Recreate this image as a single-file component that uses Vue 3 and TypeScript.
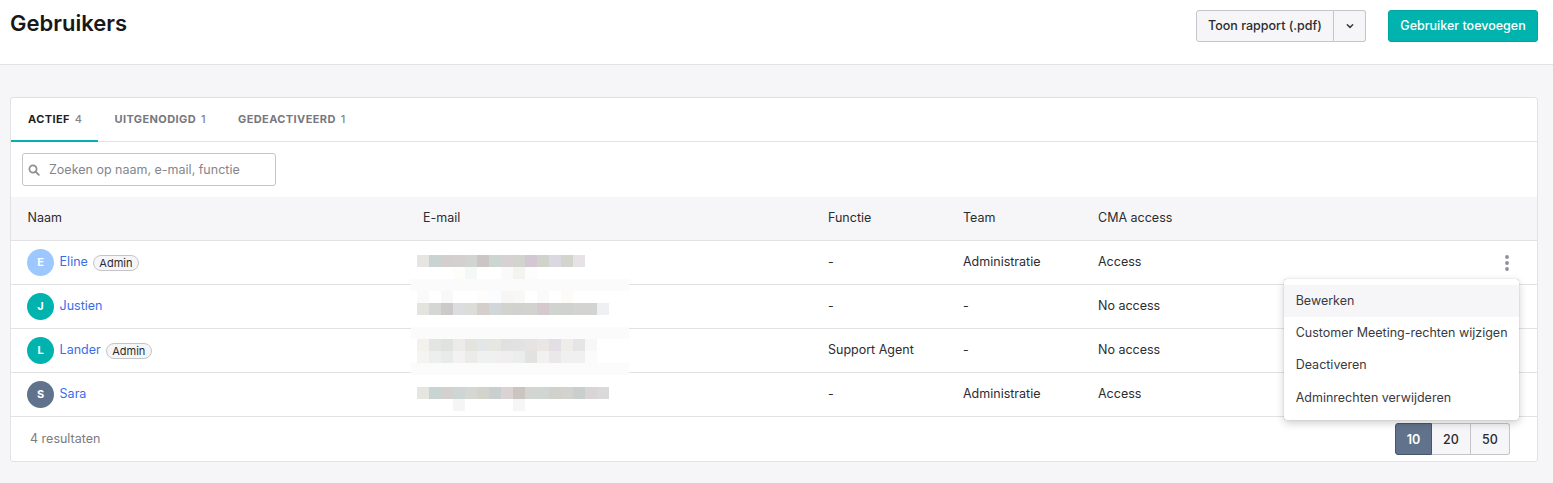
<script setup lang="ts">
interface User { initial: string; name: string; admin: boolean; color: string; func: string; team: string; access: string }

const users: User[] = [
  { initial: 'E', name: 'Eline', admin: true, color: '#9dc8ff', func: '-', team: 'Administratie', access: 'Access' },
  { initial: 'J', name: 'Justien', admin: false, color: '#00b3ae', func: '-', team: '-', access: 'No access' },
  { initial: 'L', name: 'Lander', admin: true, color: '#00b3ae', func: 'Support Agent', team: '-', access: 'No access' },
  { initial: 'S', name: 'Sara', admin: false, color: '#61738c', func: '-', team: 'Administratie', access: 'Access' },
]

const tabs = [
  { label: 'Actief', count: 4, active: true },
  { label: 'Uitgenodigd', count: 1, active: false },
  { label: 'Gedeactiveerd', count: 1, active: false },
]

const menu = ['Bewerken', 'Customer Meeting-rechten wijzigen', 'Deactiveren', 'Adminrechten verwijderen']
const pages = [10, 20, 50]

const w = '#ffffff'
const mosaic: { patch?: boolean; cells: string[] }[] = [
  { cells: ['#e6e5e1', '#c9d3d2', '#d3cfcc', '#d4d0cd', '#d2d4d1', '#cbc5c5', '#cdd5d3', '#d6d1d3', '#d2d2ce', '#d3c7d4', '#d0d2cc', '#dbd8e2', '#d4d4cf', '#e6e2e6'] },
  { cells: [w, w, w, '#fdfdf9', '#f4f8f7', w, w, '#fafafa', '#f3f3f0', '#fcfefd'] },
  { patch: true, cells: [] },
  { cells: ['#fafafa', w, '#f8f8f8', w, w, '#fffdfb', '#fbfcfe', '#f7f6f4', '#f8f8f7', w, '#fcf9fb', w, '#fcfbf8'] },
  { cells: ['#e3e4de', '#d5d7d4', '#cdc9c8', '#dcdde0', '#dcddd8', '#d5cfcb', '#d1d6d9', '#d2d3cf', '#d1d2cf', '#d2d2cf', '#d4c9cf', '#d1d3ce', '#d0d2cf', '#d3d3d1', '#d3d4d1', '#eff0f3'] },
  { cells: [] },
  { patch: true, cells: [] },
  { cells: ['#f2f1ec', '#e3e5e3', '#dfe2de', '#ecebe9', '#e3e4de', '#e2e6e7', '#e7e6e1', '#e1e1e1', '#e2e2e3', '#e8e3e3', '#e9e7e4', '#e3dee3', '#eeedea', '#e5e5e5', '#f7f7f5'] },
  { cells: ['#f4f4f2', '#edefee', '#e9eaea', '#f3f1f1', '#ebebe9', '#eff0f0', '#f0f0ee', '#f0eeef', '#ebecec', '#e2e2e0', '#f1f1ef', '#ebe8ea', '#eff0ef', '#f0f0f0', '#fbfbf9'] },
  { patch: true, cells: [] },
  { cells: [] },
  { cells: ['#e6e6e1', '#c9d3d2', '#d3d1ce', '#cdd5d5', '#d6d6d3', '#d3d3ce', '#c9cfcf', '#d9d4d3', '#cbc5c2', '#d2d5d2', '#cfd6d4', '#d0d1cb', '#d2d2cf', '#c9cfcd', '#d9d5d4', '#dadada'] },
  { cells: [w, w, w, '#f5f5f5', w, w, w, w, '#f6f6f6'] },
]
</script>

<template>
  <div class="page">
    <header class="top">
      <h1 class="title">Gebruikers</h1>
      <div class="actions">
        <div class="split">
          <button class="btn split-main">Toon rapport (.pdf)</button>
          <button class="btn split-caret" aria-label="Meer">
            <svg width="10" height="10" viewBox="0 0 10 10"><path d="M2.3 3.8 5 6.4l2.7-2.6" fill="none" stroke="#3a3a40" stroke-width="1.5" stroke-linecap="round" stroke-linejoin="round" /></svg>
          </button>
        </div>
        <button class="btn primary">Gebruiker toevoegen</button>
      </div>
    </header>

    <main class="main">
      <section class="card">
        <nav class="tabs">
          <a v-for="t in tabs" :key="t.label" class="tab" :class="{ active: t.active }">
            <span class="tab-label">{{ t.label }}</span><span class="tab-count">{{ t.count }}</span>
          </a>
        </nav>

        <div class="toolbar">
          <label class="search">
            <svg class="search-icon" width="12" height="12" viewBox="0 0 12 12"><circle cx="5" cy="5" r="3.6" fill="none" stroke="#8f8f94" stroke-width="1.7" /><path d="M7.8 7.8 10.8 10.8" stroke="#8f8f94" stroke-width="1.9" stroke-linecap="round" /></svg>
            <input class="search-input" type="text" placeholder="Zoeken op naam, e-mail, functie" />
          </label>
        </div>

        <div class="row head">
          <div>Naam</div>
          <div>E-mail</div>
          <div>Functie</div>
          <div>Team</div>
          <div>CMA access</div>
          <div></div>
        </div>

        <div v-for="(u, i) in users" :key="u.name" class="row">
          <div class="user">
            <span class="avatar" :style="{ background: u.color }">{{ u.initial }}</span>
            <a class="name">{{ u.name }}</a>
            <span v-if="u.admin" class="badge">Admin</span>
          </div>
          <div></div>
          <div class="cell-text">{{ u.func }}</div>
          <div class="cell-text">{{ u.team }}</div>
          <div class="cell-text">{{ u.access }}</div>
          <div class="more">
            <svg v-if="i === 0" width="6" height="18" viewBox="0 0 6 18"><circle cx="3" cy="3" r="1.9" fill="#8f8f98" /><circle cx="3" cy="9" r="1.9" fill="#8f8f98" /><circle cx="3" cy="15" r="1.9" fill="#8f8f98" /></svg>
          </div>
        </div>

        <footer class="foot">
          <span class="results">4 resultaten</span>
          <div class="pager">
            <button v-for="(p, i) in pages" :key="p" class="page-btn" :class="{ current: i === 0 }">{{ p }}</button>
          </div>
        </footer>

        <div class="mosaic" aria-hidden="true">
          <div v-for="(r, i) in mosaic" :key="i" class="mosaic-row" :class="{ patch: r.patch }">
            <span v-for="(c, j) in r.cells" :key="j" class="cell" :style="{ background: c }"></span>
          </div>
        </div>

        <ul class="menu">
          <li v-for="(m, i) in menu" :key="m" class="menu-item" :class="{ hover: i === 0 }">{{ m }}</li>
        </ul>
      </section>
    </main>
  </div>
</template>

<style>
html, body { margin: 0; background: #f6f6f8; }
</style>

<style scoped>
.page {
  min-height: 483px;
  background: #f6f6f8;
  font-family: Inter, "Noto Sans", sans-serif;
  font-size: 12.5px;
  color: #2c2c30;
  overflow: hidden;
}
.top {
  background: #fff;
  border-bottom: 1px solid #e2e2e4;
  display: flex;
  justify-content: space-between;
  align-items: flex-start;
  padding: 9px 15px 0 10px;
  box-sizing: border-box;
  height: 65px;
}
.title {
  margin: 0;
  font-size: 22px;
  line-height: 28px;
  font-weight: 600;
  color: #18181b;
}
.actions { display: flex; gap: 22px; padding-top: 1px; }
.split { display: flex; }
.btn {
  height: 32px;
  box-sizing: border-box;
  font: 500 12.5px Inter, sans-serif;
  border-radius: 3px;
  cursor: pointer;
  padding: 0 0 2px;
}
.split-main {
  width: 138px;
  color: #2c2c30;
  background: #f6f6f8;
  border: 1px solid #c5c5c9;
  border-radius: 3px 0 0 3px;
}
.split-caret {
  width: 32px;
  background: #f6f6f8;
  border: 1px solid #c5c5c9;
  border-left: 0;
  border-radius: 0 3px 3px 0;
  display: flex;
  align-items: center;
  justify-content: center;
  padding: 0;
}
.primary {
  width: 150px;
  color: #fff;
  background: #00b3ae;
  border: 1px solid #00a5a0;
}
.main { padding: 32px 15px 21px 10px; }
.card {
  position: relative;
  background: #fff;
  border: 1px solid #e2e2e4;
  border-radius: 3px;
}
.tabs {
  height: 44px;
  box-sizing: border-box;
  display: flex;
  border-bottom: 1px solid #e2e2e4;
}
.tab {
  height: 44px;
  box-sizing: border-box;
  display: flex;
  align-items: center;
  gap: 5px;
  padding: 0 16px 2px;
  font-size: 11px;
  font-weight: 700;
  letter-spacing: 0.4px;
  text-transform: uppercase;
  color: #77777d;
}
.tab:first-child { padding-left: 17px; }
.tab.active {
  color: #1f1f23;
  border-bottom: 2px solid #00b3ae;
  padding-bottom: 0;
}
.tab-count { color: #85858c; font-weight: 500; }
.toolbar { height: 55px; box-sizing: border-box; padding: 11px 11px 0; }
.search {
  position: relative;
  display: block;
  width: 254px;
  height: 33px;
}
.search-icon { position: absolute; left: 6px; top: 11px; }
.search-input {
  width: 100%;
  height: 100%;
  box-sizing: border-box;
  padding: 0 8px 0 26px;
  font: 400 12.5px Inter, sans-serif;
  color: #2c2c30;
  background: #fff;
  border: 1px solid #c5c5c9;
  border-radius: 3px;
  outline: none;
}
.search-input::placeholder { color: #85858c; opacity: 1; }
.row {
  height: 44px;
  box-sizing: border-box;
  display: grid;
  grid-template-columns: 412px 405px 135px 135px 1fr 60px;
  align-items: center;
  border-bottom: 1px solid #e2e2e4;
}
.row > div:first-child { padding-left: 16px; }
.row.head {
  background: #f6f6f8;
  padding-bottom: 2px;
}
.row.head > div:first-child { padding-left: 16.5px; }
.cell-text { padding-bottom: 2px; }
.user { display: flex; align-items: center; }
.avatar {
  width: 27px;
  height: 27px;
  flex: none;
  border-radius: 50%;
  display: flex;
  align-items: center;
  justify-content: center;
  color: #fff;
  font-size: 11px;
  font-weight: 700;
  padding-bottom: 2px;
  box-sizing: border-box;
}
.name { margin: 0 0 2px 5.6px; color: #3a6ee8; }
.badge {
  margin: 1px 0 0 5px;
  height: 16px;
  box-sizing: border-box;
  padding: 0 5.5px 1px;
  display: inline-flex;
  align-items: center;
  font-size: 11px;
  color: #2c2c30;
  background: #f6f6f8;
  border: 1px solid #c5c5c9;
  border-radius: 8px;
}
.more { display: flex; justify-content: center; }
.foot {
  height: 44px;
  display: flex;
  justify-content: space-between;
  align-items: flex-start;
  padding: 6px 27px 0 19px;
  color: #7c7c80;
  box-sizing: border-box;
}
.results { line-height: 31px; }
.pager { display: flex; }
.page-btn {
  width: 39px;
  height: 32px;
  padding: 0;
  font: 500 12.5px Inter, sans-serif;
  color: #2c2c30;
  background: #f6f6f8;
  border: 1px solid #c5c5c9;
  border-left: 0;
  box-sizing: border-box;
}
.page-btn:last-child { border-radius: 0 3px 3px 0; }
.page-btn.current {
  width: 37px;
  color: #fff;
  font-weight: 600;
  background: #61738c;
  border: 1px solid #47566b;
  border-radius: 3px 0 0 3px;
}
.mosaic {
  position: absolute;
  left: 400px;
  top: 157px;
  width: 218px;
}
.mosaic-row { height: 12px; display: flex; padding-left: 6px; box-sizing: border-box; }
.mosaic-row.patch { background: #fbfbfb; }
.cell { width: 12px; height: 12px; flex: none; }
.menu {
  position: absolute;
  left: 1273px;
  top: 181px;
  width: 235px;
  margin: 0;
  padding: 6px 0;
  box-sizing: border-box;
  list-style: none;
  background: #fff;
  border-radius: 3px;
  box-shadow: 0 0 1px rgba(0, 0, 0, 0.35), 0 3px 8px rgba(0, 0, 0, 0.2);
}
.menu-item {
  height: 32.25px;
  line-height: 31px;
  padding-left: 11.7px;
  color: #3a3a40;
  white-space: nowrap;
}
.menu-item:nth-child(3) { line-height: 30px; }
.menu-item.hover { background: #f6f6f8; }
</style>
